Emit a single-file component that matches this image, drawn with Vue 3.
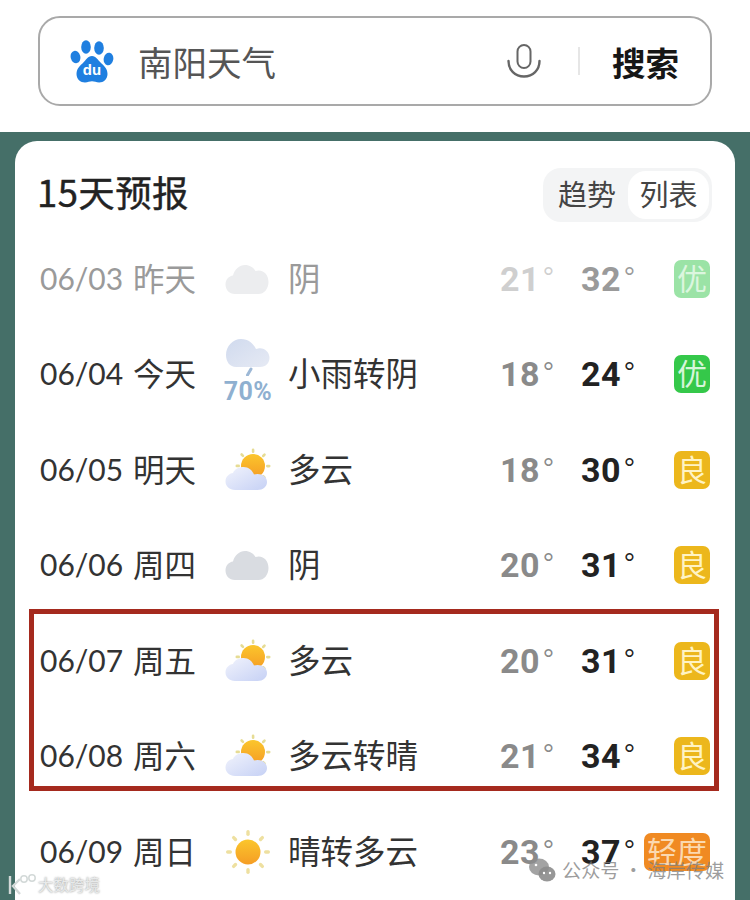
<script setup>
const days = [
  { date: '06/03', week: '昨天', icon: 'cloud', text: '阴', low: 21, high: 32, aqi: '优', level: 'good', past: true },
  { date: '06/04', week: '今天', icon: 'rain', text: '小雨转阴', low: 18, high: 24, aqi: '优', level: 'good' },
  { date: '06/05', week: '明天', icon: 'partly', text: '多云', low: 18, high: 30, aqi: '良', level: 'fair' },
  { date: '06/06', week: '周四', icon: 'cloud', text: '阴', low: 20, high: 31, aqi: '良', level: 'fair' },
  { date: '06/07', week: '周五', icon: 'partly', text: '多云', low: 20, high: 31, aqi: '良', level: 'fair' },
  { date: '06/08', week: '周六', icon: 'partly', text: '多云转晴', low: 21, high: 34, aqi: '良', level: 'fair' },
  { date: '06/09', week: '周日', icon: 'sun', text: '晴转多云', low: 23, high: 37, aqi: '轻度', level: 'light' }
]

const rays = [0, 45, 90, 135, 180, 225, 270, 315]
</script>

<template>
  <div class="page">
    <svg class="defs" width="0" height="0" aria-hidden="true">
      <defs>
        <linearGradient id="sunFill" x1="0" y1="0" x2="0" y2="1">
          <stop offset="0" stop-color="#fbc62c" />
          <stop offset="1" stop-color="#f59d25" />
        </linearGradient>
        <linearGradient id="cloudBlue" x1="0" y1="0" x2="1" y2="1">
          <stop offset="0" stop-color="#f1f3fc" />
          <stop offset="1" stop-color="#c6d1f5" />
        </linearGradient>
        <linearGradient id="rainCloud" x1="0" y1="0" x2="1" y2="1">
          <stop offset="0" stop-color="#d0daee" />
          <stop offset="1" stop-color="#e6eaf4" />
        </linearGradient>
      </defs>
    </svg>

    <header class="search-wrap">
      <div class="search">
        <svg class="paw" viewBox="0 0 44 44">
          <ellipse cx="16" cy="8" rx="4.800" ry="6.800" fill="#1f7fe0" />
          <ellipse cx="29" cy="9" rx="4.800" ry="6.800" fill="#1f7fe0" />
          <ellipse cx="5.500" cy="18" rx="4.800" ry="6.300" fill="#1f7fe0" transform="rotate(-14 5.500 18)" />
          <ellipse cx="38.500" cy="20" rx="4.800" ry="6.300" fill="#1f7fe0" transform="rotate(10 38.500 20)" />
          <path d="M22 17c-4.500 0-6 4-9 7-3 2.600-6.500 5.500-6.500 11 0 5 4 8.500 8.500 8.500 3 0 4.500-1.200 7-1.200s4.200 1.200 7.200 1.200c4.300 0 8.300-3.500 8.300-8.500 0-5.500-3.700-8.300-6.500-11-3-3-5-7-9-7z" fill="#1f7fe0" />
          <text x="22" y="36" text-anchor="middle" class="du">du</text>
        </svg>
        <span class="query">南阳天气</span>
        <svg class="mic" viewBox="0 0 34 34" fill="none" stroke="#666" stroke-width="2">
          <rect x="10.500" y="1" width="13" height="23" rx="6.500" />
          <path d="M1.500 17c0 9 6.500 15.500 15.500 15.500S32.500 26 32.500 17" stroke-width="2.400" stroke-linecap="round" />
        </svg>
        <i class="divider"></i>
        <span class="submit">搜索</span>
      </div>
    </header>

    <main class="backdrop">
      <section class="card">
        <div class="card-head">
          <h2>15天预报</h2>
          <div class="toggle">
            <span>趋势</span>
            <span class="on">列表</span>
          </div>
        </div>

        <div class="list">
          <div v-for="d in days" :key="d.date" class="row" :class="{ past: d.past }">
            <span class="date">{{ d.date }}</span>
            <span class="week">{{ d.week }}</span>
            <div class="icon">
              <svg v-if="d.icon === 'cloud'" viewBox="0 0 48 48">
                <path d="M11 39C5 39 1.500 34.500 1.500 29.500c0-5 3.500-8.500 7.500-9C10.500 14.500 15.500 10 21 10c4.500 0 8.500 2.500 10.500 6 1-.4 2.200-.6 3.200-.6 5.800 0 9.800 5 9.800 11.500C44.500 33.800 40 39 34.500 39z" :fill="d.past ? '#ecedef' : '#d9dce1'" />
              </svg>
              <template v-else-if="d.icon === 'rain'">
                <svg class="rain-cloud" viewBox="0 0 48 38">
                  <path d="M12 29C6 29 2 24 2 17 2 8 9 1 17 1c7 0 12 4 15 10 1.500-.6 3-.8 4-.8 5.500 0 9.500 4.500 9.500 9.500S42 29 36 29z" fill="url(#rainCloud)" />
                  <path d="M27 31l-3.500 6" stroke="#9db8d6" stroke-width="3" stroke-linecap="round" fill="none" />
                </svg>
                <span class="chance">70%</span>
              </template>
              <svg v-else-if="d.icon === 'partly'" viewBox="0 0 48 48">
                <g v-for="r in rays.slice(0, 6)" :key="r" :transform="`rotate(${r - 90} 29 20)`">
                  <rect x="27.800" y="2.500" width="2.600" height="4.500" rx="1.300" fill="#e6dc94" />
                </g>
                <circle cx="29" cy="20" r="12" fill="url(#sunFill)" />
                <path d="M11 44C5.500 44 1.500 40 1.500 35.500c0-4.800 3.500-8 7.500-8.500C10.500 23 15 21 19.500 21c5 0 9 3.500 10.500 7.500 1-.3 2.500-.5 3.500-.5 5.500 0 9.500 3.500 9.500 8 0 4.500-4 8-9.500 8z" fill="url(#cloudBlue)" />
              </svg>
              <svg v-else viewBox="0 0 48 48">
                <g v-for="r in rays" :key="r" :transform="`rotate(${r} 24 24)`">
                  <rect x="22.300" y="2" width="3.400" height="6" rx="1.700" fill="#eee0a0" />
                </g>
                <circle cx="24" cy="24" r="12.500" fill="url(#sunFill)" />
              </svg>
            </div>
            <span class="text">{{ d.text }}</span>
            <span class="low">{{ d.low }}<i>°</i></span>
            <span class="high">{{ d.high }}<i>°</i></span>
            <span class="aqi" :class="d.level">{{ d.aqi }}</span>
          </div>
        </div>
      </section>
    </main>

    <!-- annotation and watermarks sit over the screenshot -->
    <div class="highlight"></div>

    <div class="mark-left">
      <svg viewBox="0 0 30 22" width="30" height="22" fill="none" stroke="#d3d9d8" stroke-width="2.400">
        <path d="M3 3v18M13 6L6 13l7 8" />
        <circle cx="17" cy="6" r="3.200" stroke-width="1.500" />
        <circle cx="25" cy="5" r="3.200" stroke-width="1.500" />
      </svg>
      <span>大数跨境</span>
    </div>

    <div class="mark-right">
      <svg viewBox="0 0 28 26" width="28" height="26">
        <ellipse cx="11" cy="10" rx="10" ry="8.500" fill="#8c8c8c" fill-opacity=".8" />
        <ellipse cx="19" cy="17" rx="8.500" ry="7.500" fill="#8c8c8c" fill-opacity=".9" />
        <circle cx="16" cy="16" r="1.200" fill="#fff" />
        <circle cx="22" cy="16" r="1.200" fill="#fff" />
        <circle cx="8" cy="8" r="1.300" fill="#fff" />
      </svg>
      <span>公众号 · 海岸传媒</span>
    </div>
  </div>
</template>

<style scoped>
.page {
  position: relative;
  width: 750px;
  height: 900px;
  overflow: hidden;
  background: #fff;
  font-family: "Noto Sans CJK SC", "Noto Sans", sans-serif;
  color: #2b2b2b;
}

.defs {
  position: absolute;
}

.search-wrap {
  height: 132px;
  padding: 16px 38px 0;
  box-sizing: border-box;
}

.search {
  display: flex;
  align-items: center;
  height: 90px;
  box-sizing: border-box;
  border: 2.500px solid #a9a9a9;
  border-radius: 22px;
  padding-left: 30px;
}

.paw {
  width: 44px;
  height: 44px;
  margin-right: 24px;
}

.du {
  font-family: "Liberation Sans", sans-serif;
  font-size: 15px;
  font-weight: 700;
  fill: #fff;
}

.query {
  font-size: 34.500px;
  line-height: 40px;
  color: #555;
  width: 369px;
}

.mic {
  width: 34px;
  height: 34px;
}

.divider {
  width: 2px;
  height: 28px;
  margin: 0 32px 0 37px;
  background: #e6e6e6;
}

.submit {
  font-size: 33.500px;
  font-weight: 700;
  color: #161616;
}

.backdrop {
  height: 768px;
  padding: 9px 15px 0;
  box-sizing: border-box;
  background: #456f68;
}

.card {
  height: 100%;
  padding: 0 25px;
  background: #fff;
  border-radius: 22px 22px 0 0;
}

.card-head {
  display: flex;
  align-items: center;
  justify-content: space-between;
  height: 90px;
  padding-top: 17px;
  box-sizing: border-box;
  margin: 0 -2px 0 -3px;
}

.card-head h2 {
  margin: 0 0 6px;
  font-size: 36.500px;
  font-weight: 400;
  line-height: 44px;
  letter-spacing: 0.400px;
  color: #222;
  -webkit-text-stroke: 0.4px #222;
}

.toggle {
  display: flex;
  align-items: center;
  width: 169px;
  height: 54px;
  box-sizing: border-box;
  padding: 3px;
  background: #f3f4f5;
  border-radius: 18px;
  font-size: 29px;
  color: #444;
}

.toggle span {
  flex: 1;
  text-align: center;
  line-height: 44px;
  padding-bottom: 4px;
}

.toggle .on {
  flex: 0 0 81px;
  background: #fff;
  border-radius: 18px;
}

.row {
  display: grid;
  grid-template-columns: 93px 91px 64px 212px 81px 93px 36px;
  align-items: center;
  height: 95.500px;
}

.date {
  font-family: Lato, "Noto Sans", sans-serif;
  font-size: 30px;
  color: #333;
  margin-bottom: 2px;
}

.week {
  font-size: 31.500px;
  line-height: 40px;
  color: #333;
  margin-bottom: 4px;
}

.icon {
  position: relative;
  display: flex;
  flex-direction: column;
  align-items: center;
  width: 48px;
}

.icon svg {
  width: 48px;
  height: 48px;
}

.icon .rain-cloud {
  height: 38px;
  margin-top: -6px;
}

.chance {
  font-family: Roboto, sans-serif;
  font-size: 25px;
  font-weight: 700;
  line-height: 24px;
  margin-top: 4px;
  color: #8fb0d0;
  letter-spacing: 0.500px;
}

.text {
  font-size: 32.500px;
  line-height: 40px;
  color: #333;
  margin-bottom: 4px;
}

.low,
.high {
  font-family: Roboto, sans-serif;
  font-size: 34px;
  font-weight: 700;
  letter-spacing: 0.500px;
  line-height: 40px;
}

.low i,
.high i {
  font-style: normal;
  font-weight: 300;
  margin-left: 2px;
}

.low {
  color: #8a8a8a;
}

.high {
  color: #222;
}

.aqi {
  justify-self: end;
  min-width: 36px;
  padding: 0 3px;
  box-sizing: border-box;
  height: 38px;
  line-height: 34px;
  text-align: center;
  white-space: nowrap;
  border-radius: 7px;
  font-size: 30px;
}

.aqi.good {
  background: #35c84a;
  color: #d6f6da;
}

.aqi.fair {
  background: #ecb71c;
  color: #fff3c4;
}

.aqi.light {
  background: #f08a22;
  color: #fbd9b0;
}

.past .date,
.past .week,
.past .text {
  color: #9a9a9a;
}

.past .low {
  color: #cfcfcf;
}

.past .high {
  color: #9a9a9a;
}

.past .aqi {
  background: #9be3a6;
  color: #dcf6df;
}

.highlight {
  position: absolute;
  left: 29px;
  top: 609px;
  width: 690px;
  height: 182px;
  box-sizing: border-box;
  border: 5px solid #a52a1e;
}

.mark-left {
  position: absolute;
  left: 7px;
  top: 873px;
  display: flex;
  align-items: center;
  gap: 1px;
  font-size: 15.500px;
  line-height: 22px;
  color: #e8eaea;
  text-shadow: 0 0 2px #8a8a8a;
}

.mark-right {
  position: absolute;
  left: 528px;
  top: 857px;
  display: flex;
  align-items: center;
  gap: 6px;
  font-size: 19.200px;
  line-height: 26px;
  color: rgba(125, 125, 125, 0.75);
  white-space: nowrap;
}
</style>
